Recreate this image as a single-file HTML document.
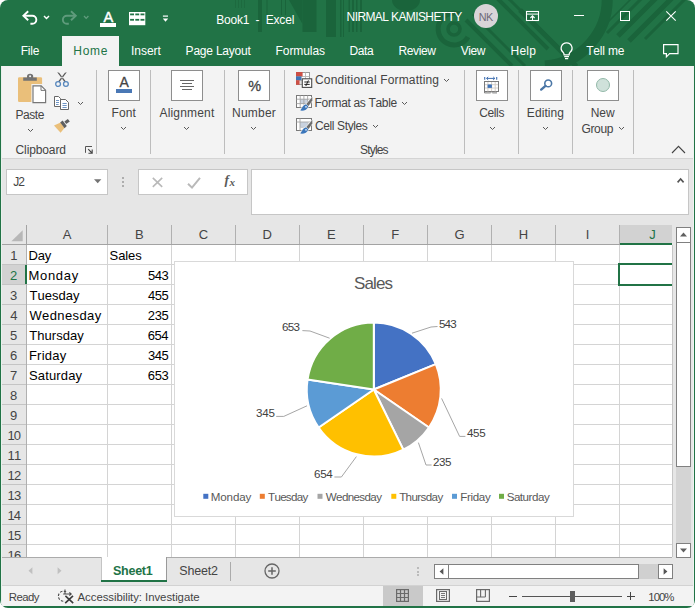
<!DOCTYPE html>
<html lang="en">
<head>
<meta charset="utf-8">
<title>Book1 - Excel</title>
<style>
html,body{margin:0;padding:0;background:#fff;}
body{width:695px;height:608px;overflow:hidden;font-family:"Liberation Sans",sans-serif;}
#app{position:absolute;left:0;top:0;width:695px;height:608px;background:#217346;border-radius:8px;overflow:hidden;}
#app div,#app span,#app svg{box-sizing:border-box;}
.t{position:absolute;white-space:pre;line-height:1;font-kerning:none;font-family:"Liberation Sans",sans-serif;}
svg{overflow:visible;}
</style>
</head>
<body>
<div id="app">
<svg style="position:absolute;left:0px;top:0px;" width="695" height="66" viewBox="0 0 695 66">
<g fill="#1a643b" stroke="none">
<rect x="235" y="0" width="1" height="8" opacity=".6"/><rect x="238" y="0" width="1" height="8" opacity=".6"/><rect x="241" y="0" width="1" height="8" opacity=".6"/><rect x="244" y="0" width="1" height="8" opacity=".6"/>
<rect x="258" y="0" width="4" height="32"/>
<rect x="266.5" y="0" width="1" height="25"/>
<rect x="281" y="0" width="1" height="15"/><rect x="285" y="0" width="1" height="15"/>
<path d="M289 0 L302.5 0 L302.5 24 Z"/>
<rect x="302.5" y="0" width="14" height="32"/>
<rect x="326" y="0" width="10" height="37"/>
<rect x="340" y="0" width="1.5" height="37"/><rect x="343" y="0" width="1" height="37"/>
<rect x="348.5" y="0" width="1.5" height="32"/><rect x="352" y="0" width="2" height="32"/><rect x="356" y="0" width="1.5" height="32"/><rect x="360" y="0" width="2" height="32"/>
<path d="M392 0 A14 11 0 0 0 420 0 Z"/>
</g>
<g fill="none" stroke="#1a643b">
<circle cx="454" cy="29" r="6" stroke-width="3.5"/>
<path d="M461 14.5 A16 16 0 1 0 468 37" stroke-width="5"/>
<path d="M466 20 L512 66" stroke-width="4"/>
<path d="M473 14 L525 66" stroke-width="3"/>
<path d="M497 -2 L548 49" stroke-width="4"/>
<path d="M508 -2 L565 55" stroke-width="3"/>
<path d="M520 10 L576 66" stroke-width="5"/>
<path d="M535 24 L577 66" stroke-width="3"/>
<path d="M607 -6 A67 67 0 0 1 545 66" stroke-width="11"/>
<path d="M632 -2 L600 30" stroke-width="1.5"/>
<path d="M642 -2 L607 33" stroke-width="3"/>
<path d="M656 -2 L618 36" stroke-width="5"/>
<path d="M672 -2 L629 41" stroke-width="5"/>
<path d="M686 -2 L645 39" stroke-width="3"/>
</g>
</svg>
<svg style="position:absolute;left:0px;top:0px;" width="60" height="36" viewBox="0 0 60 36"><path d="M28.2 11.2 L23.4 15.7 L28.2 20.2" fill="none" stroke="#fff" stroke-width="1.9"/><path d="M24 15.7 H32.3 A4.05 4.05 0 0 1 32.3 23.8 H30.4" fill="none" stroke="#fff" stroke-width="1.9"/></svg>
<svg style="position:absolute;left:43.4px;top:15.099999999999998px;" width="7" height="4.6" viewBox="0 0 7 4.6"><path d="M1 1 L3.5 3.6 L6 1" fill="none" stroke="#fff" stroke-width="1.4"/></svg>
<svg style="position:absolute;left:0px;top:0px;" width="100" height="36" viewBox="0 0 100 36"><g transform="translate(99.2,0) scale(-1,1)"><path d="M28.2 11.2 L23.4 15.7 L28.2 20.2" fill="none" stroke="#5f9b7c" stroke-width="1.9"/><path d="M24 15.7 H32.3 A4.05 4.05 0 0 1 32.3 23.8 H30.4" fill="none" stroke="#5f9b7c" stroke-width="1.9"/></g></svg>
<svg style="position:absolute;left:82.8px;top:15.2px;" width="6.4" height="4.4" viewBox="0 0 6.4 4.4"><path d="M1 1 L3.2 3.4 L5.4 1" fill="none" stroke="#5f9b7c" stroke-width="1.3"/></svg>
<span class="t" id="t0" style="left:103.47px;top:9.84px;font-size:14.6px;letter-spacing:0.000px;color:#fff;-webkit-text-stroke:0.45px #fff;">A</span>
<div style="position:absolute;left:100px;top:23px;width:16px;height:3.6px;background:#fff;"></div>
<svg style="position:absolute;left:129px;top:11.8px;" width="17" height="14" viewBox="0 0 17 14"><rect x="0" y="0" width="16.3" height="13.2" fill="#fff"/><rect x="1.1" y="1.5" width="3.9" height="1.8" fill="#217346"/><rect x="6.3" y="1.5" width="3.9" height="1.8" fill="#217346"/><rect x="11.5" y="1.5" width="3.9" height="1.8" fill="#217346"/><rect x="1.1" y="6.9" width="3.9" height="1.8" fill="#217346"/><rect x="6.3" y="6.9" width="3.9" height="1.8" fill="#217346"/><rect x="11.5" y="6.9" width="3.9" height="1.8" fill="#217346"/></svg>
<svg style="position:absolute;left:162px;top:15px;" width="7" height="8" viewBox="0 0 7 8"><rect x="0.9" y="0.5" width="5.1" height="1.2" fill="#fff"/><path d="M0.8 3.4 H6.2 L3.5 6.8 Z" fill="#fff"/></svg>
<span class="t" id="t1" style="left:216.22px;top:13.84px;font-size:12px;letter-spacing:-0.187px;color:#fff;">Book1  -  Excel</span>
<span class="t" id="t2" style="left:346.62px;top:10.64px;font-size:12px;letter-spacing:-0.606px;color:#fff;">NIRMAL KAMISHETTY</span>
<div style="position:absolute;left:473.8px;top:3.8px;width:24.4px;height:24.4px;border-radius:50%;background:#d9d4d8;"></div>
<span class="t" id="t3" style="left:478.71px;top:12.16px;font-size:10.8px;letter-spacing:-0.396px;color:#6e6b78;">NK</span>
<svg style="position:absolute;left:526px;top:11px;" width="13" height="10" viewBox="0 0 13 10"><rect x="0.5" y="0.5" width="12" height="9" fill="none" stroke="#fff" stroke-width="1.1"/><path d="M0.5 3.1 H12.5" stroke="#fff" stroke-width="1"/><path d="M6.5 9.5 V5 M4.4 7 L6.5 4.9 L8.6 7" fill="none" stroke="#fff" stroke-width="1.1"/></svg>
<div style="position:absolute;left:574px;top:15px;width:10px;height:1px;background:#fff;"></div>
<div style="position:absolute;left:620px;top:11px;width:10px;height:10px;border:1px solid #fff;"></div>
<svg style="position:absolute;left:666px;top:11px;" width="10" height="10" viewBox="0 0 10 10"><path d="M0.3 0.3 L9.7 9.7 M9.7 0.3 L0.3 9.7" stroke="#fff" stroke-width="1.1" fill="none"/></svg>
<div style="position:absolute;left:62px;top:36px;width:57px;height:30px;background:#f3f3f3;"></div>
<span class="t" id="t4" style="left:20.72px;top:44.74px;font-size:12px;letter-spacing:-0.206px;color:#fff;">File</span>
<span class="t" id="t5" style="left:73.32px;top:44.74px;font-size:12px;letter-spacing:0.736px;color:#217346;">Home</span>
<span class="t" id="t6" style="left:131.09px;top:44.74px;font-size:12px;letter-spacing:-0.043px;color:#fff;">Insert</span>
<span class="t" id="t7" style="left:185.62px;top:44.74px;font-size:12px;letter-spacing:-0.212px;color:#fff;">Page Layout</span>
<span class="t" id="t8" style="left:275.62px;top:44.74px;font-size:12px;letter-spacing:-0.085px;color:#fff;">Formulas</span>
<span class="t" id="t9" style="left:349.62px;top:44.74px;font-size:12px;letter-spacing:-0.454px;color:#fff;">Data</span>
<span class="t" id="t10" style="left:398.42px;top:44.74px;font-size:12px;letter-spacing:-0.358px;color:#fff;">Review</span>
<span class="t" id="t11" style="left:460.75px;top:44.74px;font-size:12px;letter-spacing:-0.462px;color:#fff;">View</span>
<span class="t" id="t12" style="left:510.62px;top:44.74px;font-size:12px;letter-spacing:0.203px;color:#fff;">Help</span>
<span class="t" id="t13" style="left:586.13px;top:44.74px;font-size:12px;letter-spacing:-0.156px;color:#fff;">Tell me</span>
<svg style="position:absolute;left:559.8px;top:42.4px;" width="14" height="18" viewBox="0 0 14 18"><path d="M6.6 0.8 A5.3 5.3 0 0 1 10.3 10 C9.4 10.9 9.1 11.6 9.1 12.8 H4.1 C4.1 11.6 3.8 10.9 2.9 10 A5.3 5.3 0 0 1 6.6 0.8 Z" fill="none" stroke="#fff" stroke-width="1.3"/><path d="M4.2 14.6 H9 M5 16.6 H8.2" stroke="#fff" stroke-width="1.2"/></svg>
<svg style="position:absolute;left:663px;top:44px;" width="16" height="14" viewBox="0 0 16 14"><path d="M0.6 0.6 H15 V9.6 H6.6 L3.4 12.8 V9.6 H0.6 Z" fill="none" stroke="#fff" stroke-width="1.2" stroke-linejoin="miter"/></svg>
<div style="position:absolute;left:2px;top:66px;width:691px;height:92px;background:#f3f3f3;"></div>
<div style="position:absolute;left:2px;top:158px;width:691px;height:1px;background:#d4d4d4;"></div>
<div style="position:absolute;left:2px;top:159px;width:691px;height:447px;background:#e6e6e6;"></div>
<div style="position:absolute;left:1px;top:66px;width:1px;height:540px;background:#e9f1ec;"></div>
<div style="position:absolute;left:693px;top:66px;width:1px;height:540px;background:#eef3f0;"></div>
<div style="position:absolute;left:96px;top:70px;width:1px;height:84px;background:#bdbdbd;"></div>
<div style="position:absolute;left:150px;top:70px;width:1px;height:84px;background:#bdbdbd;"></div>
<div style="position:absolute;left:224px;top:70px;width:1px;height:84px;background:#bdbdbd;"></div>
<div style="position:absolute;left:284px;top:70px;width:1px;height:84px;background:#bdbdbd;"></div>
<div style="position:absolute;left:464px;top:70px;width:1px;height:84px;background:#bdbdbd;"></div>
<div style="position:absolute;left:518px;top:70px;width:1px;height:84px;background:#bdbdbd;"></div>
<div style="position:absolute;left:572px;top:70px;width:1px;height:84px;background:#bdbdbd;"></div>
<div style="position:absolute;left:633px;top:70px;width:1px;height:84px;background:#bdbdbd;"></div>
<div style="position:absolute;left:108px;top:70px;width:32px;height:31px;background:#fff;border:1px solid #8e8e8e;"></div>
<div style="position:absolute;left:171px;top:70px;width:32px;height:31px;background:#fff;border:1px solid #8e8e8e;"></div>
<div style="position:absolute;left:238px;top:70px;width:32px;height:31px;background:#fff;border:1px solid #8e8e8e;"></div>
<div style="position:absolute;left:476px;top:70px;width:32px;height:31px;background:#fff;border:1px solid #8e8e8e;"></div>
<div style="position:absolute;left:530px;top:70px;width:32px;height:31px;background:#fff;border:1px solid #8e8e8e;"></div>
<div style="position:absolute;left:587px;top:70px;width:32px;height:31px;background:#fff;border:1px solid #8e8e8e;"></div>
<span class="t" id="t14" style="left:15.62px;top:109.44px;font-size:12px;letter-spacing:-0.492px;color:#444;">Paste</span>
<svg style="position:absolute;left:26.5px;top:127.94999999999999px;" width="7" height="4.5" viewBox="0 0 7 4.5"><path d="M1 1 L3.5 3.5 L6 1" fill="none" stroke="#5a5a5a" stroke-width="1.0"/></svg>
<span class="t" id="t15" style="left:15.59px;top:144.44px;font-size:12px;letter-spacing:-0.123px;color:#444;">Clipboard</span>
<span class="t" id="t16" style="left:111.62px;top:107.44px;font-size:12px;letter-spacing:0.087px;color:#444;">Font</span>
<svg style="position:absolute;left:120.3px;top:125.94999999999999px;" width="7" height="4.5" viewBox="0 0 7 4.5"><path d="M1 1 L3.5 3.5 L6 1" fill="none" stroke="#5a5a5a" stroke-width="1.0"/></svg>
<span class="t" id="t17" style="left:159.48px;top:107.44px;font-size:12px;letter-spacing:0.181px;color:#444;">Alignment</span>
<svg style="position:absolute;left:183.3px;top:125.94999999999999px;" width="7" height="4.5" viewBox="0 0 7 4.5"><path d="M1 1 L3.5 3.5 L6 1" fill="none" stroke="#5a5a5a" stroke-width="1.0"/></svg>
<span class="t" id="t18" style="left:232.02px;top:107.44px;font-size:12px;letter-spacing:0.221px;color:#444;">Number</span>
<svg style="position:absolute;left:250.3px;top:125.94999999999999px;" width="7" height="4.5" viewBox="0 0 7 4.5"><path d="M1 1 L3.5 3.5 L6 1" fill="none" stroke="#5a5a5a" stroke-width="1.0"/></svg>
<span class="t" id="t19" style="left:479.19px;top:107.44px;font-size:12px;letter-spacing:-0.357px;color:#444;">Cells</span>
<svg style="position:absolute;left:488.5px;top:125.94999999999999px;" width="7" height="4.5" viewBox="0 0 7 4.5"><path d="M1 1 L3.5 3.5 L6 1" fill="none" stroke="#5a5a5a" stroke-width="1.0"/></svg>
<span class="t" id="t20" style="left:526.82px;top:107.44px;font-size:12px;letter-spacing:0.078px;color:#444;">Editing</span>
<svg style="position:absolute;left:542.3px;top:125.94999999999999px;" width="7" height="4.5" viewBox="0 0 7 4.5"><path d="M1 1 L3.5 3.5 L6 1" fill="none" stroke="#5a5a5a" stroke-width="1.0"/></svg>
<span class="t" id="t21" style="left:590.82px;top:107.44px;font-size:12px;letter-spacing:-0.125px;color:#444;">New</span>
<span class="t" id="t22" style="left:581.40px;top:123.44px;font-size:12px;letter-spacing:-0.311px;color:#444;">Group</span>
<svg style="position:absolute;left:617.5px;top:126.15px;" width="7" height="4.5" viewBox="0 0 7 4.5"><path d="M1 1 L3.5 3.5 L6 1" fill="none" stroke="#5a5a5a" stroke-width="1.0"/></svg>
<span class="t" id="t23" style="left:314.99px;top:74.34px;font-size:12px;letter-spacing:0.155px;color:#444;">Conditional Formatting</span>
<svg style="position:absolute;left:442.5px;top:77.75px;" width="7" height="4.5" viewBox="0 0 7 4.5"><path d="M1 1 L3.5 3.5 L6 1" fill="none" stroke="#5a5a5a" stroke-width="1.0"/></svg>
<span class="t" id="t24" style="left:314.62px;top:97.24px;font-size:12px;letter-spacing:-0.346px;color:#444;">Format as Table</span>
<svg style="position:absolute;left:400.5px;top:100.75px;" width="7" height="4.5" viewBox="0 0 7 4.5"><path d="M1 1 L3.5 3.5 L6 1" fill="none" stroke="#5a5a5a" stroke-width="1.0"/></svg>
<span class="t" id="t25" style="left:314.99px;top:120.24px;font-size:12px;letter-spacing:-0.384px;color:#444;">Cell Styles</span>
<svg style="position:absolute;left:371.5px;top:123.75px;" width="7" height="4.5" viewBox="0 0 7 4.5"><path d="M1 1 L3.5 3.5 L6 1" fill="none" stroke="#5a5a5a" stroke-width="1.0"/></svg>
<span class="t" id="t26" style="left:360.06px;top:144.44px;font-size:12px;letter-spacing:-0.820px;color:#444;">Styles</span>
<svg style="position:absolute;left:671px;top:145px;" width="15" height="9" viewBox="0 0 15 9"><path d="M1 8 L7.5 1.3 L14 8" fill="none" stroke="#444" stroke-width="1.1"/></svg>
<svg style="position:absolute;left:85px;top:146px;" width="8" height="8" viewBox="0 0 8 8"><path d="M0.5 6.8 V0.5 H7" fill="none" stroke="#555" stroke-width="1"/><path d="M3.2 3.2 L7 7 M7.2 3.4 V7.2 H3.4" fill="none" stroke="#444" stroke-width="1.1"/></svg>
<svg style="position:absolute;left:18px;top:74px;" width="29" height="31" viewBox="0 0 29 31"><path d="M1.3 3.2 H22.8 A1.3 1.3 0 0 1 24.1 4.5 V10 H13.4 V28 H1.3 A1.3 1.3 0 0 1 0 26.7 V4.5 A1.3 1.3 0 0 1 1.3 3.2 Z" fill="#eabf7a"/>
<path d="M5.2 6.7 V3.4 H9 V2.4 A3.1 2.6 0 0 1 15.2 2.4 V3.4 H18.8 V6.7 Z" fill="#737373"/>
<circle cx="12.1" cy="2.2" r="1.05" fill="#f3f3f3"/>
<path d="M15 11.8 H23.2 L27.6 16.2 V28.6 H15 Z" fill="#fff" stroke="#777" stroke-width="1.2"/>
<path d="M23 11.8 V16.4 H27.6" fill="none" stroke="#777" stroke-width="1"/></svg>
<svg style="position:absolute;left:55px;top:72px;" width="14" height="15" viewBox="0 0 14 15"><path d="M2.2 0.3 L4.1 0.7 L10.9 9.4 L9.7 10.3 Z M11.8 0.3 L9.9 0.7 L3.1 9.4 L4.3 10.3 Z" fill="#5a5a5a"/>
<circle cx="3.1" cy="12" r="2.4" fill="none" stroke="#5787bd" stroke-width="1.3"/>
<circle cx="10.9" cy="12" r="2.4" fill="none" stroke="#5787bd" stroke-width="1.3"/></svg>
<svg style="position:absolute;left:54px;top:96px;" width="16" height="14" viewBox="0 0 16 14"><path d="M0.5 0.5 H4.5 L6.5 2.5 V10.5 H0.5 Z" fill="#fff" stroke="#666" stroke-width="1"/>
<path d="M2 4.5 H5 M2 6.5 H5 M2 8.5 H4.6" stroke="#4a7ab5" stroke-width=".8"/>
<path d="M6.5 3.5 H11.5 L14.5 6.5 V13.5 H6.5 Z" fill="#fff" stroke="#666" stroke-width="1"/>
<path d="M8.5 7.5 H12.7 M8.5 9.5 H12.7 M8.5 11.5 H12.7" stroke="#4a7ab5" stroke-width=".8"/></svg>
<svg style="position:absolute;left:76.5px;top:100.95px;" width="7" height="4.5" viewBox="0 0 7 4.5"><path d="M1 1 L3.5 3.5 L6 1" fill="none" stroke="#5a5a5a" stroke-width="1.0"/></svg>
<svg style="position:absolute;left:54px;top:119.2px;" width="17" height="14" viewBox="0 0 17 14"><path d="M0 6.6 L6.6 3.4 L10.6 8.8 L6.6 13.8 Z" fill="#eabf7a"/>
<path d="M6.2 3.4 L8.6 1.6 L12.8 7 L10.6 9.2 Z" fill="#5f5f5f"/>
<path d="M10.4 2.6 L13.8 0 L15.8 2.4 L12.2 5 Z" fill="#5f5f5f"/></svg>
<span class="t" id="t27" style="left:119.57px;top:75.15px;font-size:14px;letter-spacing:0.000px;color:#444;-webkit-text-stroke:0.3px #444;">A</span>
<div style="position:absolute;left:116px;top:89px;width:16px;height:4px;background:#4a78b5;"></div>
<svg style="position:absolute;left:171px;top:80px;" width="32" height="11" viewBox="0 0 32 11"><path d="M9 0.5 H23 M11 3.5 H21 M9 6.5 H23 M11 9.5 H21" stroke="#666" stroke-width="1" fill="none"/></svg>
<span class="t" id="t28" style="left:248.28px;top:79.13px;font-size:14.5px;letter-spacing:0.000px;color:#444;-webkit-text-stroke:0.3px #444;">%</span>
<svg style="position:absolute;left:484px;top:76px;" width="15" height="18" viewBox="0 0 15 18"><path d="M0.7 1 V3.8 M12.7 1 V3.8" stroke="#3f6fb0" stroke-width="1.1" fill="none"/>
<path d="M2.6 2.4 H10.8 M4.2 0.9 L2.6 2.4 L4.2 3.9 M9.2 0.9 L10.8 2.4 L9.2 3.9" stroke="#3f6fb0" stroke-width="1" fill="none"/>
<rect x="0.5" y="5.5" width="14" height="10" fill="#fff" stroke="#7a7a7a" stroke-width="1"/>
<path d="M3.9 6 V15.5 M7.6 6 V15.5 M11.2 6 V15.5 M1 8.7 H14 M1 12 H14" stroke="#cfc8c2" stroke-width=".9"/>
<rect x="3.6" y="8.5" width="4.3" height="3.4" fill="#3f73b7"/>
<path d="M0.5 15.5 V16.9 H6.3 L7.5 15.9 L8.7 16.9 H13 " fill="none" stroke="#7a7a7a" stroke-width="1"/></svg>
<svg style="position:absolute;left:538.5px;top:78.7px;" width="14" height="13" viewBox="0 0 14 13"><circle cx="9.2" cy="4.4" r="3.4" fill="none" stroke="#4a76a6" stroke-width="1.6"/><path d="M6.5 6.9 L2.2 10.6" stroke="#4a76a6" stroke-width="2.4" stroke-linecap="round"/></svg>
<div style="position:absolute;left:596px;top:78px;width:14px;height:14px;border-radius:50%;background:#cfe1da;border:1px solid #93b9a9;"></div>
<svg style="position:absolute;left:296px;top:72px;" width="17" height="16" viewBox="0 0 17 16"><rect x="0.5" y="0.5" width="13" height="12" fill="#fff" stroke="#9a9a9a" stroke-width="1"/>
<path d="M5 0.5 V12.5 M9.5 0.5 V12.5 M0.5 4.5 H13.5 M0.5 8.5 H13.5" stroke="#b5b5b5" stroke-width=".9"/>
<rect x="0" y="0" width="6.6" height="4.4" fill="#cc4f45"/>
<rect x="0" y="4.4" width="5.4" height="3.8" fill="#3f75b8"/>
<rect x="0" y="8.2" width="3.6" height="4.6" fill="#cc4f45"/>
<rect x="6.3" y="6.8" width="9.4" height="8.6" fill="#fff" stroke="#4a4a4a" stroke-width="1.1"/>
<path d="M8.3 10 H13.7 M8.3 12.4 H13.7 M12.4 8.4 L9.8 14" stroke="#222" stroke-width="1" fill="none"/></svg>
<svg style="position:absolute;left:296px;top:95px;" width="18" height="17" viewBox="0 0 18 17"><rect x="0.5" y="0.5" width="15" height="12" fill="#fff" stroke="#7a7a7a" stroke-width="1"/>
<rect x="4" y="4" width="7.5" height="5" fill="#c9d2df"/><path d="M4.2 .5 V12.5 M7.9 .5 V12.5 M11.6 .5 V12.5 M.5 4.2 H15.5 M.5 8.6 H15.5" stroke="#a5a5a5" stroke-width=".9"/>
<path d="M16.6 1.2 L16.8 5.6 L12.8 11.6 C12 15 8 16.6 3.4 16.2 C5.4 13 6.4 9.4 9.8 8.6 Z" fill="#f3f3f3"/>
<path d="M16.3 2 V5.4 L12.6 10.9 L10.3 9.1 Z" fill="#6d6d6d"/>
<path d="M10.2 9.5 C7.6 9.4 6.6 12 4.3 15.6 C7.6 16.1 11.4 15 12.3 11.3 Z" fill="#3b76bb"/>
<circle cx="10" cy="11.8" r=".9" fill="#dfe9f5"/></svg>
<svg style="position:absolute;left:296px;top:118px;" width="18" height="17" viewBox="0 0 18 17"><rect x="0.5" y="0.5" width="15" height="12" fill="#fff" stroke="#7a7a7a" stroke-width="1"/>
<rect x="4" y="4" width="8" height="5.4" fill="#c9d2df"/><path d="M4 .5 V12.5 M.5 4 H15.5" stroke="#a5a5a5" stroke-width=".9"/><path d="M4 9.4 H12 M12 4 V9.4" stroke="#c0c0c0" stroke-width=".8"/>
<path d="M16.6 1.2 L16.8 5.6 L12.8 11.6 C12 15 8 16.6 3.4 16.2 C5.4 13 6.4 9.4 9.8 8.6 Z" fill="#f3f3f3"/>
<path d="M16.3 2 V5.4 L12.6 10.9 L10.3 9.1 Z" fill="#6d6d6d"/>
<path d="M10.2 9.5 C7.6 9.4 6.6 12 4.3 15.6 C7.6 16.1 11.4 15 12.3 11.3 Z" fill="#3b76bb"/>
<circle cx="10" cy="11.8" r=".9" fill="#dfe9f5"/></svg>
<div style="position:absolute;left:6px;top:169px;width:102px;height:26px;background:#fff;border:1px solid #c6c6c6;"></div>
<span class="t" id="t29" style="left:13.21px;top:176.04px;font-size:12px;letter-spacing:-0.883px;color:#444;">J2</span>
<svg style="position:absolute;left:94px;top:179px;" width="8" height="5" viewBox="0 0 8 5"><path d="M0 0.2 H7.4 L3.7 4.2 Z" fill="#737373"/></svg>
<div style="position:absolute;left:122px;top:177px;width:2px;height:2px;background:#adadad;"></div>
<div style="position:absolute;left:122px;top:181px;width:2px;height:2px;background:#adadad;"></div>
<div style="position:absolute;left:122px;top:185px;width:2px;height:2px;background:#adadad;"></div>
<div style="position:absolute;left:138px;top:169px;width:110px;height:26px;background:#fff;border:1px solid #c6c6c6;"></div>
<svg style="position:absolute;left:151.5px;top:177px;" width="12" height="11" viewBox="0 0 12 11"><path d="M0.8 0.8 L10.2 9.8 M10.2 0.8 L0.8 9.8" stroke="#b9b9b9" stroke-width="1.6" fill="none"/></svg>
<svg style="position:absolute;left:186.5px;top:176.5px;" width="15" height="12" viewBox="0 0 15 12"><path d="M1 6.8 L5 10.6 L13 0.9" stroke="#b9b9b9" stroke-width="2" fill="none"/></svg>
<span class="t" style="left:224.6px;top:173px;font-family:&quot;Liberation Serif&quot;,serif;font-style:italic;font-weight:700;font-size:13.5px;color:#5a5a5a;">f</span>
<span class="t" style="left:229.4px;top:176.6px;font-family:&quot;Liberation Serif&quot;,serif;font-style:italic;font-weight:700;font-size:11px;color:#5a5a5a;">x</span>
<div style="position:absolute;left:251px;top:169px;width:438px;height:46px;background:#fff;border:1px solid #c6c6c6;"></div>
<svg style="position:absolute;left:677px;top:178px;" width="8" height="5" viewBox="0 0 8 5"><path d="M0.6 4.4 L3.6 1 L6.6 4.4" fill="none" stroke="#555" stroke-width="1.6"/></svg>
<div style="position:absolute;left:27px;top:245px;width:645px;height:312px;background:#fff;"></div>
<div style="position:absolute;left:620px;top:225px;width:52px;height:19px;background:#d2d2d2;"></div>
<div style="position:absolute;left:620px;top:243px;width:52px;height:2px;background:#217346;"></div>
<div style="position:absolute;left:2px;top:265px;width:24px;height:19px;background:#d2d2d2;"></div>
<div style="position:absolute;left:25px;top:265px;width:2px;height:19px;background:#217346;"></div>
<div style="position:absolute;left:2px;top:244px;width:670px;height:1px;background:#a3a3a3;"></div>
<div style="position:absolute;left:620px;top:243px;width:52px;height:2px;background:#217346;"></div>
<div style="position:absolute;left:26px;top:225px;width:1px;height:19px;background:#a3a3a3;"></div>
<div style="position:absolute;left:107px;top:225px;width:1px;height:19px;background:#b0b0b0;"></div>
<div style="position:absolute;left:107px;top:245px;width:1px;height:312px;background:#d4d4d4;"></div>
<div style="position:absolute;left:171px;top:225px;width:1px;height:19px;background:#b0b0b0;"></div>
<div style="position:absolute;left:171px;top:245px;width:1px;height:312px;background:#d4d4d4;"></div>
<div style="position:absolute;left:235px;top:225px;width:1px;height:19px;background:#b0b0b0;"></div>
<div style="position:absolute;left:235px;top:245px;width:1px;height:312px;background:#d4d4d4;"></div>
<div style="position:absolute;left:299px;top:225px;width:1px;height:19px;background:#b0b0b0;"></div>
<div style="position:absolute;left:299px;top:245px;width:1px;height:312px;background:#d4d4d4;"></div>
<div style="position:absolute;left:363px;top:225px;width:1px;height:19px;background:#b0b0b0;"></div>
<div style="position:absolute;left:363px;top:245px;width:1px;height:312px;background:#d4d4d4;"></div>
<div style="position:absolute;left:427px;top:225px;width:1px;height:19px;background:#b0b0b0;"></div>
<div style="position:absolute;left:427px;top:245px;width:1px;height:312px;background:#d4d4d4;"></div>
<div style="position:absolute;left:491px;top:225px;width:1px;height:19px;background:#b0b0b0;"></div>
<div style="position:absolute;left:491px;top:245px;width:1px;height:312px;background:#d4d4d4;"></div>
<div style="position:absolute;left:555px;top:225px;width:1px;height:19px;background:#b0b0b0;"></div>
<div style="position:absolute;left:555px;top:245px;width:1px;height:312px;background:#d4d4d4;"></div>
<div style="position:absolute;left:619px;top:225px;width:1px;height:19px;background:#b0b0b0;"></div>
<div style="position:absolute;left:619px;top:245px;width:1px;height:312px;background:#d4d4d4;"></div>
<div style="position:absolute;left:26px;top:245px;width:1px;height:312px;background:#b0b0b0;"></div>
<div style="position:absolute;left:25px;top:265px;width:2px;height:19px;background:#217346;"></div>
<div style="position:absolute;left:2px;top:264px;width:24px;height:1px;background:#c4c4c4;"></div>
<div style="position:absolute;left:27px;top:264px;width:645px;height:1px;background:#d4d4d4;"></div>
<div style="position:absolute;left:2px;top:284px;width:24px;height:1px;background:#c4c4c4;"></div>
<div style="position:absolute;left:27px;top:284px;width:645px;height:1px;background:#d4d4d4;"></div>
<div style="position:absolute;left:2px;top:304px;width:24px;height:1px;background:#c4c4c4;"></div>
<div style="position:absolute;left:27px;top:304px;width:645px;height:1px;background:#d4d4d4;"></div>
<div style="position:absolute;left:2px;top:324px;width:24px;height:1px;background:#c4c4c4;"></div>
<div style="position:absolute;left:27px;top:324px;width:645px;height:1px;background:#d4d4d4;"></div>
<div style="position:absolute;left:2px;top:344px;width:24px;height:1px;background:#c4c4c4;"></div>
<div style="position:absolute;left:27px;top:344px;width:645px;height:1px;background:#d4d4d4;"></div>
<div style="position:absolute;left:2px;top:364px;width:24px;height:1px;background:#c4c4c4;"></div>
<div style="position:absolute;left:27px;top:364px;width:645px;height:1px;background:#d4d4d4;"></div>
<div style="position:absolute;left:2px;top:384px;width:24px;height:1px;background:#c4c4c4;"></div>
<div style="position:absolute;left:27px;top:384px;width:645px;height:1px;background:#d4d4d4;"></div>
<div style="position:absolute;left:2px;top:404px;width:24px;height:1px;background:#c4c4c4;"></div>
<div style="position:absolute;left:27px;top:404px;width:645px;height:1px;background:#d4d4d4;"></div>
<div style="position:absolute;left:2px;top:424px;width:24px;height:1px;background:#c4c4c4;"></div>
<div style="position:absolute;left:27px;top:424px;width:645px;height:1px;background:#d4d4d4;"></div>
<div style="position:absolute;left:2px;top:444px;width:24px;height:1px;background:#c4c4c4;"></div>
<div style="position:absolute;left:27px;top:444px;width:645px;height:1px;background:#d4d4d4;"></div>
<div style="position:absolute;left:2px;top:464px;width:24px;height:1px;background:#c4c4c4;"></div>
<div style="position:absolute;left:27px;top:464px;width:645px;height:1px;background:#d4d4d4;"></div>
<div style="position:absolute;left:2px;top:484px;width:24px;height:1px;background:#c4c4c4;"></div>
<div style="position:absolute;left:27px;top:484px;width:645px;height:1px;background:#d4d4d4;"></div>
<div style="position:absolute;left:2px;top:504px;width:24px;height:1px;background:#c4c4c4;"></div>
<div style="position:absolute;left:27px;top:504px;width:645px;height:1px;background:#d4d4d4;"></div>
<div style="position:absolute;left:2px;top:524px;width:24px;height:1px;background:#c4c4c4;"></div>
<div style="position:absolute;left:27px;top:524px;width:645px;height:1px;background:#d4d4d4;"></div>
<div style="position:absolute;left:2px;top:544px;width:24px;height:1px;background:#c4c4c4;"></div>
<div style="position:absolute;left:27px;top:544px;width:645px;height:1px;background:#d4d4d4;"></div>
<svg style="position:absolute;left:11px;top:229.5px;" width="12" height="11.5" viewBox="0 0 12 11.5"><path d="M11.7 0.3 V11.2 H0.4 Z" fill="#b7b7b7"/></svg>
<span class="t" id="t30" style="left:62.66px;top:228.40px;font-size:13px;letter-spacing:0.000px;color:#444;">A</span>
<span class="t" id="t31" style="left:134.97px;top:228.40px;font-size:13px;letter-spacing:0.000px;color:#444;">B</span>
<span class="t" id="t32" style="left:198.72px;top:228.40px;font-size:13px;letter-spacing:0.000px;color:#444;">C</span>
<span class="t" id="t33" style="left:262.58px;top:228.40px;font-size:13px;letter-spacing:0.000px;color:#444;">D</span>
<span class="t" id="t34" style="left:326.91px;top:228.40px;font-size:13px;letter-spacing:0.000px;color:#444;">E</span>
<span class="t" id="t35" style="left:391.26px;top:228.40px;font-size:13px;letter-spacing:0.000px;color:#444;">F</span>
<span class="t" id="t36" style="left:454.60px;top:228.40px;font-size:13px;letter-spacing:0.000px;color:#444;">G</span>
<span class="t" id="t37" style="left:518.80px;top:228.40px;font-size:13px;letter-spacing:0.000px;color:#444;">H</span>
<span class="t" id="t38" style="left:585.69px;top:228.40px;font-size:13px;letter-spacing:0.000px;color:#444;">I</span>
<span class="t" id="t39" style="left:649.13px;top:228.40px;font-size:13px;letter-spacing:0.000px;color:#217346;">J</span>
<span class="t" id="t40" style="left:10.31px;top:249.00px;font-size:13px;letter-spacing:0.000px;color:#444;">1</span>
<span class="t" id="t41" style="left:9.95px;top:269.00px;font-size:13px;letter-spacing:0.000px;color:#217346;">2</span>
<span class="t" id="t42" style="left:10.10px;top:289.00px;font-size:13px;letter-spacing:0.000px;color:#444;">3</span>
<span class="t" id="t43" style="left:10.30px;top:309.00px;font-size:13px;letter-spacing:0.000px;color:#444;">4</span>
<span class="t" id="t44" style="left:10.08px;top:329.00px;font-size:13px;letter-spacing:0.000px;color:#444;">5</span>
<span class="t" id="t45" style="left:9.94px;top:349.00px;font-size:13px;letter-spacing:0.000px;color:#444;">6</span>
<span class="t" id="t46" style="left:9.93px;top:369.00px;font-size:13px;letter-spacing:0.000px;color:#444;">7</span>
<span class="t" id="t47" style="left:10.04px;top:389.00px;font-size:13px;letter-spacing:0.000px;color:#444;">8</span>
<span class="t" id="t48" style="left:9.99px;top:409.00px;font-size:13px;letter-spacing:0.000px;color:#444;">9</span>
<span class="t" id="t49" style="left:7.41px;top:429.00px;font-size:13px;letter-spacing:-0.762px;color:#444;">10</span>
<span class="t" id="t50" style="left:7.41px;top:449.00px;font-size:13px;letter-spacing:-0.635px;color:#444;">11</span>
<span class="t" id="t51" style="left:7.41px;top:469.00px;font-size:13px;letter-spacing:-0.616px;color:#444;">12</span>
<span class="t" id="t52" style="left:7.41px;top:489.00px;font-size:13px;letter-spacing:-0.698px;color:#444;">13</span>
<span class="t" id="t53" style="left:7.41px;top:509.00px;font-size:13px;letter-spacing:-0.889px;color:#444;">14</span>
<span class="t" id="t54" style="left:7.41px;top:529.00px;font-size:13px;letter-spacing:-0.724px;color:#444;">15</span>
<span class="t" id="t55" style="left:7.41px;top:549.00px;font-size:13px;letter-spacing:-0.698px;color:#444;">16</span>
<span class="t" id="t56" style="left:28.53px;top:249.00px;font-size:13px;letter-spacing:-0.213px;color:#000;">Day</span>
<span class="t" id="t57" style="left:109.61px;top:249.00px;font-size:13px;letter-spacing:-0.115px;color:#000;">Sales</span>
<span class="t" id="t58" style="left:28.53px;top:269.00px;font-size:13px;letter-spacing:0.689px;color:#000;">Monday</span>
<span class="t" id="t59" style="left:147.88px;top:269.00px;font-size:13px;letter-spacing:-0.399px;color:#000;">543</span>
<span class="t" id="t60" style="left:29.61px;top:289.00px;font-size:13px;letter-spacing:-0.007px;color:#000;">Tuesday</span>
<span class="t" id="t61" style="left:148.10px;top:289.00px;font-size:13px;letter-spacing:-0.523px;color:#000;">455</span>
<span class="t" id="t62" style="left:29.44px;top:309.00px;font-size:13px;letter-spacing:0.392px;color:#000;">Wednesday</span>
<span class="t" id="t63" style="left:147.75px;top:309.00px;font-size:13px;letter-spacing:-0.345px;color:#000;">235</span>
<span class="t" id="t64" style="left:29.31px;top:329.00px;font-size:13px;letter-spacing:0.032px;color:#000;">Thursday</span>
<span class="t" id="t65" style="left:147.74px;top:329.00px;font-size:13px;letter-spacing:-0.424px;color:#000;">654</span>
<span class="t" id="t66" style="left:28.93px;top:349.00px;font-size:13px;letter-spacing:0.235px;color:#000;">Friday</span>
<span class="t" id="t67" style="left:147.90px;top:349.00px;font-size:13px;letter-spacing:-0.424px;color:#000;">345</span>
<span class="t" id="t68" style="left:29.01px;top:369.00px;font-size:13px;letter-spacing:0.141px;color:#000;">Saturday</span>
<span class="t" id="t69" style="left:147.74px;top:369.00px;font-size:13px;letter-spacing:-0.329px;color:#000;">653</span>
<div style="position:absolute;left:27px;top:245px;width:645px;height:312px;overflow:hidden;"><div style="position:absolute;left:591px;top:18px;width:70px;height:23px;border:2px solid #217346;"></div></div>
<div style="position:absolute;left:2px;top:557px;width:691px;height:28px;background:#e6e6e6;"></div>
<div style="position:absolute;left:174px;top:261px;width:400px;height:256px;background:#fff;border:1px solid #d9d9d9;"></div>
<svg style="position:absolute;left:0px;top:0px;" width="695" height="608" viewBox="0 0 695 608"><path d="M373.8 389.5 L373.80 322.50 A67 67 0 0 1 435.81 364.14 Z" fill="#4472c4" stroke="#fff" stroke-width="2" stroke-linejoin="round"/><path d="M373.8 389.5 L435.81 364.14 A67 67 0 0 1 428.99 427.48 Z" fill="#ed7d31" stroke="#fff" stroke-width="2" stroke-linejoin="round"/><path d="M373.8 389.5 L428.99 427.48 A67 67 0 0 1 403.32 449.65 Z" fill="#a5a5a5" stroke="#fff" stroke-width="2" stroke-linejoin="round"/><path d="M373.8 389.5 L403.32 449.65 A67 67 0 0 1 318.61 427.48 Z" fill="#ffc000" stroke="#fff" stroke-width="2" stroke-linejoin="round"/><path d="M373.8 389.5 L318.61 427.48 A67 67 0 0 1 307.54 379.58 Z" fill="#5b9bd5" stroke="#fff" stroke-width="2" stroke-linejoin="round"/><path d="M373.8 389.5 L307.54 379.58 A67 67 0 0 1 373.80 322.50 Z" fill="#70ad47" stroke="#fff" stroke-width="2" stroke-linejoin="round"/><g fill="none" stroke="#a6a6a6" stroke-width="1">
<path d="M437.5 326.5 L431 327 L412 333.2"/>
<path d="M441.6 398.4 L459.6 436.4 L465.4 436.4"/>
<path d="M418.4 442.6 L426 465 L431.6 465"/>
<path d="M356.4 456.6 L341.4 477 L334.4 477"/>
<path d="M307 405.8 L283.8 416.4 L276.2 416.4"/>
<path d="M329.6 338.2 L310 331 L302.4 330.6"/>
</g><rect x="203.3" y="493.8" width="5" height="5" fill="#4472c4"/><rect x="259.8" y="493.8" width="5" height="5" fill="#ed7d31"/><rect x="317.5" y="493.8" width="5" height="5" fill="#a5a5a5"/><rect x="391.3" y="493.8" width="5" height="5" fill="#ffc000"/><rect x="452" y="493.8" width="5" height="5" fill="#5b9bd5"/><rect x="499" y="493.8" width="5" height="5" fill="#70ad47"/></svg>
<span class="t" id="t70" style="left:354.03px;top:275.41px;font-size:17px;letter-spacing:-0.885px;color:#595959;">Sales</span>
<span class="t" id="t71" style="left:438.94px;top:318.18px;font-size:11.6px;letter-spacing:-0.790px;color:#404040;">543</span>
<span class="t" id="t72" style="left:466.93px;top:427.48px;font-size:11.6px;letter-spacing:-0.300px;color:#404040;">455</span>
<span class="t" id="t73" style="left:433.02px;top:456.18px;font-size:11.6px;letter-spacing:-0.442px;color:#404040;">235</span>
<span class="t" id="t74" style="left:314.01px;top:468.18px;font-size:11.6px;letter-spacing:-0.313px;color:#404040;">654</span>
<span class="t" id="t75" style="left:255.96px;top:407.48px;font-size:11.6px;letter-spacing:-0.213px;color:#404040;">345</span>
<span class="t" id="t76" style="left:282.01px;top:320.58px;font-size:11.6px;letter-spacing:-0.728px;color:#404040;">653</span>
<span class="t" id="t77" style="left:210.65px;top:491.08px;font-size:11.6px;letter-spacing:-0.099px;color:#595959;">Monday</span>
<span class="t" id="t78" style="left:268.04px;top:491.08px;font-size:11.6px;letter-spacing:-0.718px;color:#595959;">Tuesday</span>
<span class="t" id="t79" style="left:325.75px;top:491.08px;font-size:11.6px;letter-spacing:-0.623px;color:#595959;">Wednesday</span>
<span class="t" id="t80" style="left:399.14px;top:491.08px;font-size:11.6px;letter-spacing:-0.610px;color:#595959;">Thursday</span>
<span class="t" id="t81" style="left:460.25px;top:491.08px;font-size:11.6px;letter-spacing:-0.351px;color:#595959;">Friday</span>
<span class="t" id="t82" style="left:506.67px;top:491.08px;font-size:11.6px;letter-spacing:-0.483px;color:#595959;">Saturday</span>
<div style="position:absolute;left:672px;top:245px;width:1px;height:312px;background:#c6c6c6;"></div>
<div style="position:absolute;left:676px;top:227px;width:15px;height:330px;background:#d4d4d4;"></div>
<div style="position:absolute;left:676px;top:227px;width:15px;height:16px;background:#fff;border:1px solid #808080;"></div>
<svg style="position:absolute;left:680px;top:232px;" width="7" height="5" viewBox="0 0 7 5"><path d="M0 4.6 L3.5 0.4 L7 4.6 Z" fill="#606060"/></svg>
<div style="position:absolute;left:676px;top:242px;width:15px;height:225px;background:#fff;border:1px solid #808080;"></div>
<div style="position:absolute;left:676px;top:543px;width:15px;height:15px;background:#fff;border:1px solid #808080;"></div>
<svg style="position:absolute;left:680px;top:548px;" width="7" height="5" viewBox="0 0 7 5"><path d="M0 0.4 L3.5 4.6 L7 0.4 Z" fill="#606060"/></svg>
<div style="position:absolute;left:2px;top:557px;width:99px;height:1px;background:#ababab;"></div>
<div style="position:absolute;left:167px;top:557px;width:505px;height:1px;background:#ababab;"></div>
<div style="position:absolute;left:101px;top:557px;width:66px;height:23px;background:#fff;"></div>
<div style="position:absolute;left:166px;top:557px;width:1px;height:23px;background:#9a9a9a;"></div>
<div style="position:absolute;left:101px;top:557px;width:1px;height:23px;background:#c4c4c4;"></div>
<div style="position:absolute;left:101px;top:580px;width:66px;height:2px;background:#217346;"></div>
<span class="t" id="t83" style="left:112.94px;top:565.42px;font-size:12.5px;letter-spacing:-0.237px;color:#217346;font-weight:700;">Sheet1</span>
<span class="t" id="t84" style="left:179.23px;top:565.42px;font-size:12.5px;letter-spacing:-0.164px;color:#444;">Sheet2</span>
<div style="position:absolute;left:230px;top:562px;width:1px;height:19px;background:#ababab;"></div>
<svg style="position:absolute;left:28px;top:566.5px;" width="5" height="8" viewBox="0 0 5 8"><path d="M4.4 0.3 V7.3 L0.5 3.8 Z" fill="#c0c0c0"/></svg>
<svg style="position:absolute;left:56.5px;top:566.5px;" width="5" height="8" viewBox="0 0 5 8"><path d="M0.6 0.3 V7.3 L4.5 3.8 Z" fill="#c0c0c0"/></svg>
<svg style="position:absolute;left:264px;top:563px;" width="16" height="16" viewBox="0 0 16 16"><circle cx="8" cy="8" r="7" fill="none" stroke="#666" stroke-width="1.3"/><path d="M4.2 8 H11.8 M8 4.2 V11.8" stroke="#666" stroke-width="1.5"/></svg>
<div style="position:absolute;left:416.5px;top:567px;width:2px;height:2px;background:#adadad;border-radius:1px;"></div>
<div style="position:absolute;left:416.5px;top:570.5px;width:2px;height:2px;background:#adadad;border-radius:1px;"></div>
<div style="position:absolute;left:416.5px;top:574px;width:2px;height:2px;background:#adadad;border-radius:1px;"></div>
<div style="position:absolute;left:434px;top:564px;width:239px;height:15px;background:#d0d0d0;"></div>
<div style="position:absolute;left:434px;top:564px;width:15px;height:15px;background:#fff;border:1px solid #808080;"></div>
<svg style="position:absolute;left:439px;top:568px;" width="5" height="7" viewBox="0 0 5 7"><path d="M4.4 0.2 V6.8 L0.6 3.5 Z" fill="#555"/></svg>
<div style="position:absolute;left:448px;top:564px;width:191px;height:15px;background:#fff;border:1px solid #808080;"></div>
<div style="position:absolute;left:658px;top:564px;width:15px;height:15px;background:#fff;border:1px solid #808080;"></div>
<svg style="position:absolute;left:663px;top:568px;" width="5" height="7" viewBox="0 0 5 7"><path d="M0.6 0.2 V6.8 L4.4 3.5 Z" fill="#555"/></svg>
<div style="position:absolute;left:2px;top:585px;width:691px;height:21px;background:#f3f3f3;"></div>
<div style="position:absolute;left:2px;top:585px;width:691px;height:1px;background:#d2d2d2;"></div>
<span class="t" id="t85" style="left:8.86px;top:592.35px;font-size:11.4px;letter-spacing:-0.599px;color:#444;">Ready</span>
<span class="t" id="t86" style="left:77.58px;top:592.35px;font-size:11.4px;letter-spacing:-0.057px;color:#444;">Accessibility: Investigate</span>
<svg style="position:absolute;left:58px;top:589px;" width="17" height="15" viewBox="0 0 17 15"><circle cx="5.4" cy="7.2" r="5" fill="none" stroke="#4a4a4a" stroke-width="1.1" stroke-dasharray="2.4 1.5"/>
<rect x="6.2" y="3" width="9" height="11.5" fill="#f3f3f3"/>
<path d="M7 0.4 V5 M5.2 5 H13 M11.4 3.4 L13.2 5 L11.4 6.6" fill="none" stroke="#4a4a4a" stroke-width="1.1"/>
<path d="M7.4 6.8 L15.2 14.2 M15 6.8 L7.2 14.2" stroke="#3c3c3c" stroke-width="1.6"/></svg>
<div style="position:absolute;left:383px;top:585.5px;width:40px;height:20.5px;background:#c9c9c9;"></div>
<svg style="position:absolute;left:396px;top:589px;" width="13" height="13" viewBox="0 0 13 13"><rect x="0.6" y="0.6" width="11.8" height="11.8" fill="none" stroke="#6a6a6a" stroke-width="1.2"/><path d="M4.5 0.5 V12.5 M8.5 0.5 V12.5 M0.5 4.5 H12.5 M0.5 8.5 H12.5" stroke="#6a6a6a" stroke-width="1.2"/></svg>
<svg style="position:absolute;left:436px;top:589px;" width="14" height="13" viewBox="0 0 14 13"><rect x="0.6" y="0.6" width="12.8" height="11.8" fill="none" stroke="#6a6a6a" stroke-width="1.2"/><rect x="3.5" y="2.5" width="7" height="8" fill="none" stroke="#6a6a6a" stroke-width="1"/><path d="M5 4.5 H9 M5 6.5 H9 M5 8.5 H9" stroke="#6a6a6a" stroke-width=".9"/></svg>
<svg style="position:absolute;left:476px;top:589px;" width="14" height="13" viewBox="0 0 14 13"><rect x="0.6" y="0.6" width="12.8" height="11.8" fill="none" stroke="#6a6a6a" stroke-width="1.2"/><path d="M4.6 0.5 V8 M9.4 0.5 V8 M0.5 8 H9.4" fill="none" stroke="#6a6a6a" stroke-width="1.1"/></svg>
<div style="position:absolute;left:509px;top:595.5px;width:7.5px;height:1px;background:#444;"></div>
<div style="position:absolute;left:522px;top:595.5px;width:99.5px;height:1px;background:#555;"></div>
<div style="position:absolute;left:570px;top:590.5px;width:5px;height:11.5px;background:#5e5e5e;"></div>
<div style="position:absolute;left:627px;top:595.5px;width:7.5px;height:1px;background:#444;"></div>
<div style="position:absolute;left:630.3px;top:592px;width:1px;height:8px;background:#444;"></div>
<span class="t" id="t87" style="left:648.33px;top:592.35px;font-size:11.4px;letter-spacing:-1.027px;color:#444;">100%</span>
</div>
</body>
</html>
